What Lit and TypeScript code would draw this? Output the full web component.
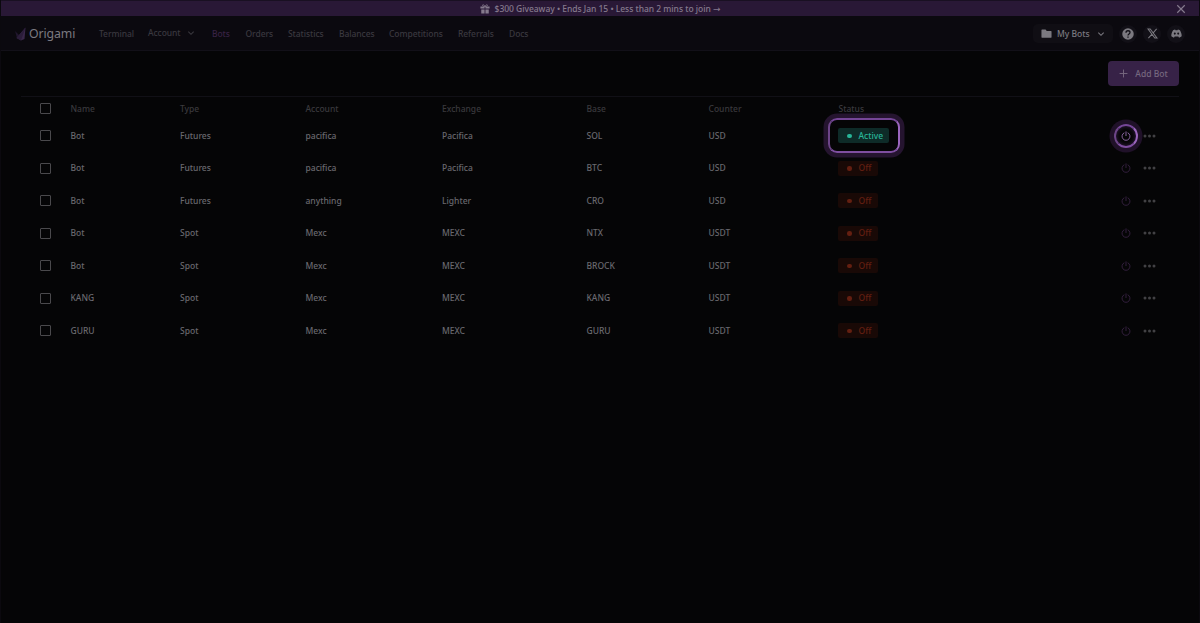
import { LitElement, html, css, svg } from "lit";
import { customElement } from "lit/decorators.js";
import { classMap } from "lit/directives/class-map.js";

const NAV = ["Terminal", "Account", "Bots", "Orders", "Statistics", "Balances", "Competitions", "Referrals", "Docs"];
const COLUMNS = ["Name", "Type", "Account", "Exchange", "Base", "Counter", "Status"];
const ROWS = [
  ["Bot", "Futures", "pacifica", "Pacifica", "SOL", "USD"],
  ["Bot", "Futures", "pacifica", "Pacifica", "BTC", "USD"],
  ["Bot", "Futures", "anything", "Lighter", "CRO", "USD"],
  ["Bot", "Spot", "Mexc", "MEXC", "NTX", "USDT"],
  ["Bot", "Spot", "Mexc", "MEXC", "BROCK", "USDT"],
  ["KANG", "Spot", "Mexc", "MEXC", "KANG", "USDT"],
  ["GURU", "Spot", "Mexc", "MEXC", "GURU", "USDT"],
];

const icon = (size: number, body: unknown) =>
  html`<svg width=${size} height=${size} viewBox="0 0 24 24" fill="none" stroke="currentColor" stroke-width="2">${body}</svg>`;

const gift = () => icon(10, svg`<g fill="currentColor" stroke="none"><path d="M1 6h10v5H1zM13 6h10v5H13zM3 13h8v10H3zM13 13h8v10h-8z"/></g><path d="M12 6C9 6 6 5 6 3s4-2 6 3c2-5 6-5 6-3s-3 3-6 3z"/>`);
const close = () => icon(10, svg`<path stroke-width="2.800" d="M3 3l18 18M21 3L3 21"/>`);
const chevron = () => icon(8, svg`<path d="M4 8l8 8 8-8" stroke-width="3.200"/>`);
const plus = () => icon(9, svg`<path stroke-width="2.500" d="M12 1.500v21M1.500 12h21"/>`);
const folder = () => icon(11, svg`<path fill="currentColor" stroke="none" d="M2 3.500h8l2.500 3H22q1 0 1 1V20q0 1-1 1H2q-1 0-1-1V4.500q0-1 1-1z"/>`);
const help = () => icon(12, svg`<circle cx="12" cy="12" r="11.500" fill="currentColor" stroke="none"/><path class="cut" stroke-width="2.600" d="M8 9.500C8 4 16 4.500 16 9c0 3-4 3-4 6M12 17v2.600"/>`);
const xLogo = () => icon(11, svg`<path d="M2 2h5l15 20h-5zM21 2L13.500 10.500M10.500 14L3 22" stroke-width="2.200"/>`);
const discord = () => icon(11, svg`<path fill="currentColor" stroke="none" fill-rule="evenodd" d="M4.500 5Q7 3.400 9 3.200l.8 1.500h4.400L15 3.200Q17 3.400 19.500 5C22 9 23.700 13.500 23.300 18Q21 20.200 17.500 21L16 18.800H8L6.500 21Q3 20.200.7 18C.3 13.500 2 9 4.500 5zM8.300 9.600a2.200 2.500 0 1 0 0 5 2.200 2.500 0 0 0 0-5zM15.700 9.600a2.200 2.500 0 1 0 0 5 2.200 2.500 0 0 0 0-5z"/>`);
const power = () => icon(10, svg`<path d="M8 4.200a9.500 9.500 0 1 0 8 0M12 1v11" stroke-width="2.300"/>`);
const dots = () => html`<svg width="13" height="4" viewBox="0 0 13 4" fill="currentColor"><circle cx="2" cy="2" r="1.500"/><circle cx="6.500" cy="2" r="1.500"/><circle cx="11" cy="2" r="1.500"/></svg>`;
const logo = () => html`<svg width="11" height="14" viewBox="0 0 11 14"><path fill="#20162d" d="M0 4l4 4-2 3z"/><path fill="#392749" d="M10.500.5L9.500 12 6 13.500 1.500 11z"/><path fill="#2b1d3a" d="M10.500.5L6 13.500 1.500 11z"/></svg>`;

@customElement("app-root")
export class AppRoot extends LitElement {
  static styles = css`
    :host {
      display: block;
      box-sizing: border-box;
      height: 623px;
      overflow: hidden;
      background: #050506;
      border-left: 1px solid #0b090e;
      border-right: 1px solid #0b090e;
      color: #69686e;
      font: 500 8.5px/12px "Noto Sans", sans-serif;
    }
    * { box-sizing: border-box; }
    svg { display: block; flex: none; }
    .banner {
      height: 16px;
      border-top: 1px solid #191022;
      background: #291836;
      color: #857a8d;
      display: grid;
      grid-template-columns: 1fr auto 1fr;
      align-items: center;
    }
    .promo { grid-column: 2; display: flex; gap: 5px; align-items: center; white-space: nowrap; }
    .promo span { letter-spacing: -0.03px; }
    .arrow { font: 9px/10px "DejaVu Sans", sans-serif; }
    .dismiss { justify-self: end; margin-right: 13px; }
    .top {
      height: 35px;
      background: #0b090f;
      border-bottom: 1px solid #121018;
      display: flex;
      align-items: center;
      padding: 1px 14px 0 14px;
    }
    .brand { display: flex; align-items: center; gap: 3px; width: 84px; font-size: 12.3px; letter-spacing: -0.1px; font-weight: 400; color: #7c7a81; }
    .nav { display: grid; grid-template-columns: 49px 64px 33.5px 42.5px 51px 50px 69px 51px 30px; color: #3a383f; letter-spacing: -0.07px; }
    .link { display: flex; align-items: center; gap: 6px; white-space: nowrap; }
    .link:nth-child(2) { padding-bottom: 1px; }
    .current { color: #382244; }
    .tools { margin-left: auto; display: flex; align-items: center; gap: 6px; color: #7b7980; }
    .select { display: flex; align-items: center; width: 80px; height: 19px; border-radius: 5px; background: #100e14; padding: 0 8px; }
    .select span { flex: 1; padding-left: 5px; }
    .round { width: 18px; height: 18px; border-radius: 50%; background: #121017; display: grid; place-items: center; }
    .cut { stroke: #121017; }
    .actions { height: 45px; display: flex; justify-content: flex-end; padding: 10px 20px 0; }
    .add {
      width: 71px;
      height: 25px;
      border: 0;
      border-radius: 4px;
      background: #372247;
      color: #76687f;
      font: inherit;
      display: flex;
      align-items: center;
      justify-content: center;
      gap: 7px;
      padding: 0;
    }
    .table { margin: 0 20px; border-top: 1px solid #111016; }
    .row {
      display: grid;
      grid-template-columns: 49.5px 109.5px 125.5px 136.500px 144.500px 122px 130px 1fr 21.500px 37px;
      height: 32.5px;
      align-items: center;
    }
    .head { height: 22.5px; color: #3a393d; padding-top: 0.500px; }
    .check { width: 11px; height: 11px; margin-left: 19px; border: 1px solid #4a494c; border-radius: 1px; }
    .cell { white-space: nowrap; }
    .status { position: relative; width: 40px; height: 15px; margin-left: -0.500px; border-radius: 2px; background: #190906; color: #641f11; display: flex; align-items: center; padding-left: 9px; gap: 7px; }
    .status::before { content: ""; width: 4.500px; height: 4.500px; border-radius: 50%; background: currentColor; position: relative; z-index: 1; }
    .active { width: 51px; background: #0e2b28; color: #28b598; }
    .tag { position: relative; z-index: 1; }
    .halo {
      position: absolute;
      inset: -10px -11px -10px -10px;
      border: 2px solid;
      border-color: #754697 #9a65bd #7f4ea0 #6d4589;
      border-radius: 9px;
      box-shadow: 0 0 0 4.500px #25142f;
    }
    .power { position: relative; width: 10px; height: 10px; color: #34203f; }
    .lit { color: #8c66a4; }
    .power .halo { inset: -7px; border-radius: 50%; box-shadow: 0 0 0 4.500px #201129, inset 0 0 4px #351e46; }
    .dots { color: #424144; padding-left: 0.500px; }
  `;

  render() {
    return html`
      <div class="banner">
        <div class="promo">${gift()}<span>$300 Giveaway • Ends Jan 15 • Less than 2 mins to join <span class="arrow">→</span></span></div>
        <div class="dismiss">${close()}</div>
      </div>
      <header class="top">
        <div class="brand">${logo()}<span>Origami</span></div>
        <nav class="nav">
          ${NAV.map((n) => html`<div class=${classMap({ link: true, current: n === "Bots" })}><span>${n}</span>${n === "Account" ? chevron() : ""}</div>`)}
        </nav>
        <div class="tools">
          <div class="select">${folder()}<span>My Bots</span>${chevron()}</div>
          <div class="round">${help()}</div>
          <div class="round">${xLogo()}</div>
          <div class="round">${discord()}</div>
        </div>
      </header>
      <div class="actions"><button class="add">${plus()}<span>Add Bot</span></button></div>
      <main class="table">
        <div class="row head"><div class="check"></div>${COLUMNS.map((c) => html`<div class="cell">${c}</div>`)}</div>
        ${ROWS.map((row, i) => html`
          <div class="row">
            <div class="check"></div>
            ${row.map((c) => html`<div class="cell">${c}</div>`)}
            <div>
              <div class=${classMap({ status: true, active: i === 0 })}><span class="tag">${i === 0 ? "Active" : "Off"}</span>${i === 0 ? html`<div class="halo"></div>` : ""}</div>
            </div>
            <div class=${classMap({ power: true, lit: i === 0 })}>${power()}${i === 0 ? html`<div class="halo"></div>` : ""}</div>
            <div class="dots">${dots()}</div>
          </div>`)}
      </main>`;
  }
}
